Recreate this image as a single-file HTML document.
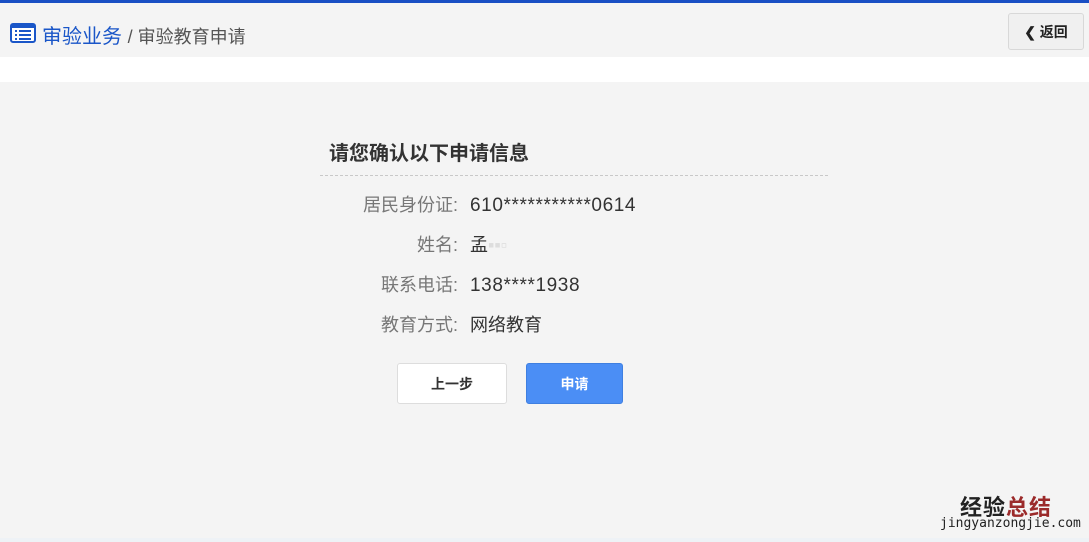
<!DOCTYPE html>
<html><head><meta charset="utf-8"><style>
body{margin:0;width:1089px;height:542px;overflow:hidden;background:#fff;font-family:"Liberation Sans","Noto Sans CJK SC",sans-serif;position:relative}
.top{position:absolute;left:0;top:0;width:1089px;height:3px;background:#1a4fc4}
.hdr{position:absolute;left:0;top:3px;width:1089px;height:54px;background:#f4f4f4}
.crumb{position:absolute;left:42px;top:17px;font-size:20px;color:#1a56c8;white-space:nowrap}
.crumb span{color:#555;font-size:18px}
.back{position:absolute;left:1008px;top:10px;width:76px;height:37px;border:1px solid #d8d8d8;border-radius:3px;background:#f0f0f0;font-size:14px;font-weight:bold;color:#222;line-height:36px;text-align:center;box-sizing:border-box}
.main{position:absolute;left:0;top:82px;width:1089px;height:456px;background:#f4f4f4}
.foot{position:absolute;left:0;top:538px;width:1089px;height:4px;background:#eef2f6}
h2{position:absolute;left:329px;top:137px;margin:0;font-size:20px;font-weight:bold;color:#333}
.line{position:absolute;left:320px;top:175px;width:508px;border-top:1px dashed #c8c8c8}
.row{position:absolute;left:300px;width:420px;font-size:18px;color:#333}
.row b{display:inline-block;width:158px;text-align:right;font-weight:normal;color:#777;margin-right:12px}
.row i{font-style:normal;font-size:19px;letter-spacing:0.6px}
.btn{position:absolute;top:363px;width:110px;height:41px;border-radius:3px;font-size:14px;font-weight:bold;line-height:41px;text-align:center;box-sizing:border-box}
.wm{position:absolute;left:960px;top:490px;font-size:22px;font-weight:bold;color:#222;letter-spacing:1px}
.wm2{position:absolute;left:940px;top:516px;font-size:13px;font-family:"DejaVu Sans Mono",monospace;color:#222}
</style></head><body>
<div class="top"></div>
<div class="hdr">
<svg style="position:absolute;left:10px;top:20px" width="26" height="20" viewBox="0 0 26 20"><rect x="1" y="1" width="24" height="18" rx="2" fill="#fff" stroke="#1a56c8" stroke-width="2"/><rect x="1" y="1" width="24" height="4" fill="#1a56c8"/><g fill="#1a56c8"><rect x="5" y="7" width="2" height="2"/><rect x="9" y="7" width="12" height="2"/><rect x="5" y="11" width="2" height="2"/><rect x="9" y="11" width="12" height="2"/><rect x="5" y="15" width="2" height="2"/><rect x="9" y="15" width="12" height="2"/></g></svg>
<div class="crumb">审验业务 <span>/ 审验教育申请</span></div>
<div class="back">&#10094; 返回</div>
</div>
<div class="main"></div>
<div class="foot"></div>
<h2>请您确认以下申请信息</h2>
<div class="line"></div>
<div class="row" style="top:191px"><b>居民身份证:</b><i>610***********0614</i></div>
<div class="row" style="top:231px"><b>姓名:</b>孟<span style="color:#ddd">▪▪▫</span></div>
<div class="row" style="top:271px"><b>联系电话:</b><i>138****1938</i></div>
<div class="row" style="top:311px"><b>教育方式:</b>网络教育</div>
<div class="btn" style="left:397px;background:#fff;border:1px solid #ddd;color:#333">上一步</div>
<div class="btn" style="left:526px;width:97px;background:#4b8ef5;border:1px solid #3f7fe0;color:#fff">申请</div>
<div class="wm">经验<span style="color:#9b2a2a">总结</span></div>
<div class="wm2">jingyanzongjie.com</div>
</body></html>
